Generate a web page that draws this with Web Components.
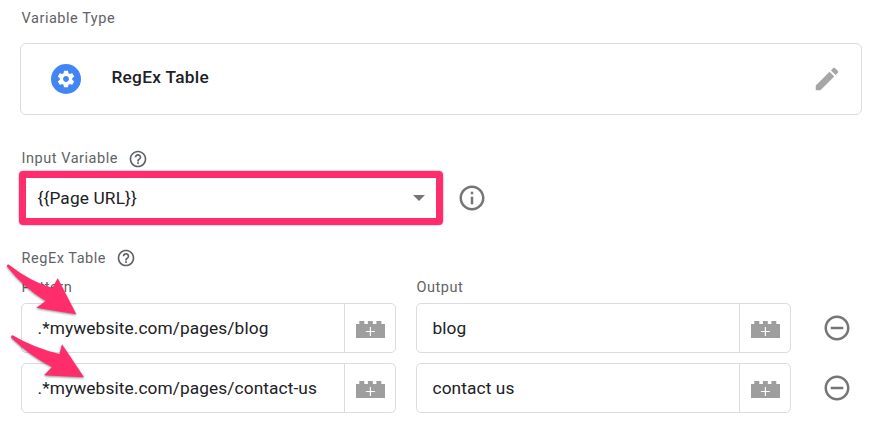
<!DOCTYPE html>
<html lang="en">
<head>
<meta charset="utf-8">
<title>Variable</title>
<style>
html,body{margin:0;background:#fff}
body{font-family:Roboto,"Noto Sans",sans-serif;color:#202124}
</style>
</head>
<body>
<variable-editor></variable-editor>
<script>
const define=(name,html,setup)=>customElements.define(name,class extends HTMLElement{
  constructor(){super();this.attachShadow({mode:'open'}).innerHTML=html;}
  connectedCallback(){if(setup)setup(this,this.shadowRoot);}
});
const icons={
  gear:'<path d="M19.43 12.98c.04-.32.07-.64.07-.98s-.03-.66-.07-.98l2.11-1.65c.19-.15.24-.42.12-.64l-2-3.46c-.12-.22-.39-.3-.61-.22l-2.49 1c-.52-.4-1.08-.73-1.69-.98l-.38-2.65C14.46 2.18 14.25 2 14 2h-4c-.25 0-.46.18-.49.42l-.38 2.65c-.61.25-1.17.59-1.69.98l-2.49-1c-.23-.09-.49 0-.61.22l-2 3.46c-.13.22-.07.49.12.64l2.11 1.65c-.04.32-.07.65-.07.98s.03.66.07.98l-2.11 1.65c-.19.15-.24.42-.12.64l2 3.46c.12.22.39.3.61.22l2.49-1c.52.4 1.08.73 1.69.98l.38 2.65c.03.24.24.42.49.42h4c.25 0 .46-.18.49-.42l.38-2.65c.61-.25 1.17-.59 1.69-.98l2.49 1c.23.09.49 0 .61-.22l2-3.46c.12-.22.07-.49-.12-.64l-2.11-1.65zM12 15.5c-1.93 0-3.5-1.57-3.5-3.5s1.57-3.5 3.5-3.5 3.5 1.57 3.5 3.5-1.57 3.5-3.5 3.5z"/>',
  pencil:'<path d="M3 17.25V21h3.75L17.81 9.94l-3.75-3.75L3 17.25zM20.71 7.04c.39-.39.39-1.02 0-1.41l-2.34-2.34c-.39-.39-1.02-.39-1.41 0l-1.83 1.83 3.75 3.75 1.83-1.83z"/>',
  help:'<path d="M11 18h2v-2h-2v2zm1-16C6.48 2 2 6.48 2 12s4.48 10 10 10 10-4.48 10-10S17.52 2 12 2zm0 18c-4.41 0-8-3.59-8-8s3.59-8 8-8 8 3.59 8 8-3.59 8-8 8zm0-14c-2.21 0-4 1.79-4 4h2c0-1.1.9-2 2-2s2 .9 2 2c0 2-3 1.75-3 5h2c0-2.25 3-2.5 3-5 0-2.21-1.79-4-4-4z"/>',
  info:'<path d="M11 17h2v-6h-2v6zm0-8h2V7h-2v2zm1-7C6.48 2 2 6.48 2 12s4.48 10 10 10 10-4.48 10-10S17.52 2 12 2zm0 18c-4.41 0-8-3.59-8-8s3.59-8 8-8 8 3.59 8 8-3.59 8-8 8z"/>',
  minus:'<path d="M7 11v2h10v-2H7zm5-9C6.48 2 2 6.48 2 12s4.48 10 10 10 10-4.48 10-10S17.52 2 12 2zm0 18c-4.41 0-8-3.59-8-8s3.59-8 8-8 8 3.59 8 8-3.59 8-8 8z"/>'
};
define('ui-icon','<style>:host{display:block;flex:none}svg{display:block;fill:currentColor}</style><svg viewBox="0 0 24 24"></svg>',(h,r)=>{
  const s=r.querySelector('svg'),z=h.getAttribute('size');s.setAttribute('width',z);s.setAttribute('height',z);s.innerHTML=icons[h.getAttribute('name')];
});
define('brick-icon','<style>:host{display:block}svg{display:block}</style><svg width="29" height="17" viewBox="0 0 29 17"><path fill="#9e9e9e" d="M0 3h3.3V0h5v3h3.6V0h4.9v3h3.6V0h4.9v3H29v14H0z"/><path d="M14.4 6v9M9.9 10.5h9" stroke="#fff" stroke-width="1.2"/></svg>');
define('field-label','<style>:host{display:flex;align-items:center;height:20px;gap:10px;font-size:14.5px;letter-spacing:.53px;color:#5f6368}ui-icon{margin-top:var(--help-drop,2px)}</style><span><slot></slot></span>',(h,r)=>{
  if(h.hasAttribute('help')&&!r.querySelector('ui-icon'))r.append(Object.assign(document.createElement('div'),{innerHTML:'<ui-icon name="help" size="20"></ui-icon>'}).firstChild);
});
define('type-card','<style>:host{display:flex;align-items:center;box-sizing:border-box;width:842px;height:72px;border:1px solid #dadce0;border-radius:6px;padding:0 19.5px 0 30px}.g{width:30px;height:30px;border-radius:50%;background:#4285f4;color:#fff;display:grid;place-items:center}b{flex:1;margin:-4px 0 0 30.4px;font-weight:500;font-size:17.3px;letter-spacing:.3px}.p{color:#a6a6a6}</style><div class="g"><ui-icon name="gear" size="20"></ui-icon></div><b><slot></slot></b><ui-icon class="p" name="pencil" size="30"></ui-icon>');
define('select-box','<style>:host{display:flex;align-items:center;justify-content:space-between;box-sizing:border-box;width:424px;height:54px;border:7px solid #ff2d6c;border-radius:4px;padding:0 11px 0 11.4px;font-size:17.3px;letter-spacing:.15px;box-shadow:0 0 0 .5px #ff2d6c66}i{width:12px;height:6px;background:#757575;clip-path:polygon(0 0,100% 0,50% 100%)}</style><span><slot></slot></span><i></i>');
define('text-field','<style>:host{display:flex;box-sizing:border-box;width:375px;height:50px;border:1px solid #dadce0;border-radius:5px;font-size:17.3px;letter-spacing:.1px}span{flex:1;padding-left:15.5px;line-height:49px;white-space:nowrap}div{width:51px;border-left:1px solid #dadce0;display:grid;place-items:center start;padding:3px 0 0 11px;box-sizing:border-box}</style><span><slot></slot></span><div><brick-icon></brick-icon></div>');
define('regex-row','<style>:host{display:flex;align-items:center;gap:20px}ui-icon{color:#757575;margin-left:10.5px}</style><text-field><slot name="pattern"></slot></text-field><text-field><slot name="output"></slot></text-field><ui-icon name="minus" size="30"></ui-icon>');
define('pointer-arrow','<style>:host{position:absolute;width:80px;height:60px}svg{display:block;overflow:visible;filter:drop-shadow(0 1px 1px #0007)}</style><svg width="80" height="60"><path fill="#ff2d6c"/></svg>',(h,r)=>r.querySelector('path').setAttribute('d',h.getAttribute('d')));
define('variable-editor',`<style>
:host{display:block;position:relative;box-sizing:border-box;width:874px;height:428px;padding:8px 0 0 20px;overflow:hidden}
field-label{margin-left:1.6px}
type-card{margin-top:15px}
.l2{margin-top:33px}
.sel{display:flex;align-items:center;gap:13.5px;margin:3px 0 0 -1px;color:#757575}
select-box{color:#202124}
.l3{margin-top:23px;--help-drop:0px}
.heads{display:grid;grid-template-columns:375px 375px;gap:20px;margin:9px 0 0 1px}
.heads field-label{margin-left:.5px}
.rows{display:grid;gap:10px;margin:6px 0 0 1px}
.a1{left:0;top:258px}.a2{left:4px;top:328px}
</style>
<field-label>Variable Type</field-label>
<type-card>RegEx Table</type-card>
<field-label class="l2" help>Input Variable</field-label>
<div class="sel"><select-box>{{Page URL}}</select-box><ui-icon name="info" size="30"></ui-icon></div>
<field-label class="l3" help>RegEx Table</field-label>
<div class="heads"><field-label>Pattern</field-label><field-label>Output</field-label></div>
<div class="rows">
<regex-row><span slot="pattern">.*mywebsite.com/pages/blog</span><span slot="output">blog</span></regex-row>
<regex-row><span slot="pattern">.*mywebsite.com/pages/contact-us</span><span slot="output">contact us</span></regex-row>
</div>
<pointer-arrow class="a1" d="M8.5 6.5Q6.6 6.3 7 8.5Q24 30 45.7 43L36.3 49.7L76.3 56.3L57.7 20.3L52.5 30Q31 24 8.5 6.5Z"></pointer-arrow>
<pointer-arrow class="a2" d="M8.5 7.3Q6.6 7.5 7.3 9.8Q26 28 48 39L40 47.3L80 49.3L58 16.3L55.5 26Q30 20 8.5 7.3Z"></pointer-arrow>`);
</script>
</body>
</html>
